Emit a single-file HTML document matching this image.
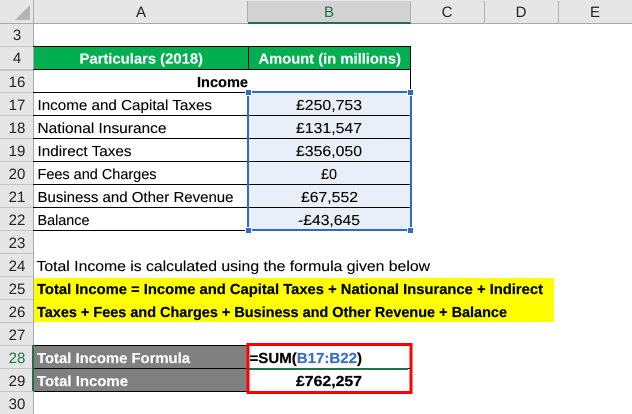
<!DOCTYPE html>
<html>
<head>
<meta charset="utf-8">
<style>
html,body{margin:0;padding:0;background:#fff;width:632px;height:414px;overflow:hidden}
svg{display:block}
text{font-family:"Liberation Sans",sans-serif;font-size:14.5px;fill:#000;stroke:#000;stroke-width:.12px}
.b{font-weight:bold;stroke-width:.2px}
.h{font-size:15px;fill:#222;stroke:none}
.r{font-size:15px;fill:#222;stroke:none}
.w{fill:#fff;font-weight:bold;stroke:#fff;stroke-width:.15px}
</style>
</head>
<body>
<svg width="632" height="414" viewBox="0 0 632 414" xmlns="http://www.w3.org/2000/svg" text-rendering="geometricPrecision">
<rect width="632" height="414" fill="#fff"/>
<!-- headers -->
<rect x="0" y="0" width="632" height="23" fill="#e6e6e6"/>
<rect x="0" y="0" width="33" height="414" fill="#e6e6e6"/>
<rect x="248" y="1" width="163" height="21" fill="#d2d2d2"/>
<rect x="0" y="23" width="632" height="1" fill="#a8a8a8"/>
<rect x="33" y="0" width="1" height="414" fill="#a8a8a8"/>
<polygon points="30,5 30,20 15,20" fill="#b4b4b4"/>
<rect x="248" y="22" width="163" height="2" fill="#217346"/>
<rect x="410" y="1" width="1" height="22" fill="#b0b0b0"/>
<rect x="484" y="1" width="1" height="22" fill="#b0b0b0"/>
<rect x="558" y="1" width="1" height="22" fill="#b0b0b0"/>
<rect x="247" y="1" width="1" height="21" fill="#b0b0b0"/>
<!-- row header separators -->
<g fill="#c4c4c4">
<rect x="0" y="46" width="33" height="1"/><rect x="0" y="69" width="33" height="2"/><rect x="0" y="92" width="33" height="1"/>
<rect x="0" y="115" width="33" height="1"/><rect x="0" y="138" width="33" height="1"/><rect x="0" y="161" width="33" height="1"/>
<rect x="0" y="184" width="33" height="1"/><rect x="0" y="207" width="33" height="1"/><rect x="0" y="230" width="33" height="1"/>
<rect x="0" y="253" width="33" height="1"/><rect x="0" y="276" width="33" height="1"/><rect x="0" y="299" width="33" height="1"/>
<rect x="0" y="322" width="33" height="1"/><rect x="0" y="345" width="33" height="1"/><rect x="0" y="368" width="33" height="1"/>
<rect x="0" y="391" width="33" height="1"/>
</g>
<rect x="32" y="345" width="2" height="46" fill="#217346"/>
<!-- column labels -->
<text class="h" x="141" y="17" text-anchor="middle">A</text>
<text class="h" x="329" y="17" text-anchor="middle" style="fill:#217346">B</text>
<text class="h" x="447" y="17" text-anchor="middle">C</text>
<text class="h" x="521" y="17" text-anchor="middle">D</text>
<text class="h" x="595" y="17" text-anchor="middle">E</text>
<!-- row labels -->
<g text-anchor="middle">
<text class="r" x="17" y="40">3</text>
<text class="r" x="17" y="63">4</text>
<text class="r" x="17" y="87">16</text>
<text class="r" x="17" y="110">17</text>
<text class="r" x="17" y="133">18</text>
<text class="r" x="17" y="156">19</text>
<text class="r" x="17" y="179">20</text>
<text class="r" x="17" y="202">21</text>
<text class="r" x="17" y="225">22</text>
<text class="r" x="17" y="248">23</text>
<text class="r" x="17" y="271">24</text>
<text class="r" x="17" y="294">25</text>
<text class="r" x="17" y="317">26</text>
<text class="r" x="17" y="340">27</text>
<text class="r" x="17" y="363" style="fill:#217346">28</text>
<text class="r" x="17" y="386">29</text>
<text class="r" x="17" y="409">30</text>
</g>
<!-- table -->
<rect x="34" y="47" width="377" height="22" fill="#00b050"/>
<rect x="249" y="93" width="161" height="137" fill="#e8eff8"/>
<g fill="#000">
<rect x="33" y="46" width="378" height="1"/>
<rect x="33" y="69" width="378" height="1"/>
<rect x="33" y="92" width="378" height="1"/>
<rect x="33" y="115" width="378" height="1"/>
<rect x="33" y="138" width="378" height="1"/>
<rect x="33" y="161" width="378" height="1"/>
<rect x="33" y="184" width="378" height="1"/>
<rect x="33" y="207" width="378" height="1"/>
<rect x="33" y="230" width="378" height="1"/>
<rect x="248" y="46" width="1" height="24"/>
<rect x="410" y="46" width="1" height="47"/>
</g>
<text class="w" x="79.5" y="63.5" textLength="123.5" lengthAdjust="spacingAndGlyphs">Particulars (2018)</text>
<text class="w" x="258.5" y="63.5" textLength="142.5" lengthAdjust="spacingAndGlyphs">Amount (in millions)</text>
<text class="b" x="197" y="87" textLength="51" lengthAdjust="spacingAndGlyphs">Income</text>
<text x="37.5" y="110" textLength="174.5" lengthAdjust="spacingAndGlyphs">Income and Capital Taxes</text>
<text x="37.5" y="133" textLength="129" lengthAdjust="spacingAndGlyphs">National Insurance</text>
<text x="37.5" y="156" textLength="94" lengthAdjust="spacingAndGlyphs">Indirect Taxes</text>
<text x="37.5" y="179" textLength="119" lengthAdjust="spacingAndGlyphs">Fees and Charges</text>
<text x="37.5" y="202" textLength="196" lengthAdjust="spacingAndGlyphs">Business and Other Revenue</text>
<text x="37.5" y="225" textLength="52" lengthAdjust="spacingAndGlyphs">Balance</text>
<text x="296" y="110" textLength="66" lengthAdjust="spacingAndGlyphs">£250,753</text>
<text x="296" y="133" textLength="66" lengthAdjust="spacingAndGlyphs">£131,547</text>
<text x="296" y="156" textLength="66" lengthAdjust="spacingAndGlyphs">£356,050</text>
<text x="321" y="179" textLength="16" lengthAdjust="spacingAndGlyphs">£0</text>
<text x="301" y="202" textLength="57" lengthAdjust="spacingAndGlyphs">£67,552</text>
<text x="298" y="225" textLength="62" lengthAdjust="spacingAndGlyphs">-£43,645</text>
<!-- selection -->
<g fill="none" stroke="#2f6bc5" stroke-width="2">
<rect x="248" y="92" width="163" height="138"/>
</g>
<g fill="#2f6bc5" stroke="#fff" stroke-width="1">
<rect x="245.5" y="89.5" width="6" height="6"/>
<rect x="407.5" y="89.5" width="6" height="6"/>
<rect x="245.5" y="227.5" width="6" height="6"/>
<rect x="407.5" y="227.5" width="6" height="6"/>
</g>
<!-- text -->
<text x="36.5" y="271" textLength="393.5" lengthAdjust="spacingAndGlyphs">Total Income is calculated using the formula given below</text>
<rect x="34" y="278" width="520" height="44" fill="#ff0" />
<text class="b" x="37" y="294" textLength="506" lengthAdjust="spacingAndGlyphs">Total Income = Income and Capital Taxes + National Insurance + Indirect</text>
<text class="b" x="37" y="317" textLength="470" lengthAdjust="spacingAndGlyphs">Taxes + Fees and Charges + Business and Other Revenue + Balance</text>
<!-- bottom table -->
<rect x="34" y="345" width="213" height="46" fill="#808080"/>
<g fill="#000">
<rect x="34" y="345" width="378" height="1"/>
<rect x="34" y="368" width="378" height="1"/>
<rect x="34" y="391" width="378" height="1"/>
</g>
<rect x="249" y="368" width="159" height="2" fill="#217346"/>
<text class="w" x="37" y="363" textLength="153" lengthAdjust="spacingAndGlyphs">Total Income Formula</text>
<text class="w" x="37" y="386" textLength="91" lengthAdjust="spacingAndGlyphs">Total Income</text>
<text class="b" x="249.5" y="363" textLength="112.5" lengthAdjust="spacingAndGlyphs">=SUM(<tspan style="fill:#3a6fc8;stroke:#3a6fc8">B17:B22</tspan>)</text>
<text class="b" x="296" y="386" textLength="66" lengthAdjust="spacingAndGlyphs">£762,257</text>
<rect x="248" y="344.5" width="163" height="48" fill="none" stroke="#ff0000" stroke-width="3"/>
</svg>
</body>
</html>
